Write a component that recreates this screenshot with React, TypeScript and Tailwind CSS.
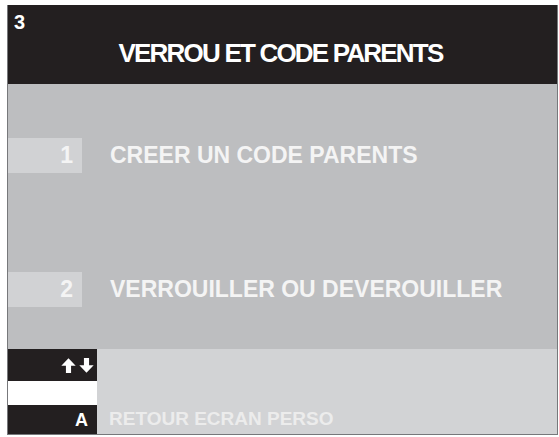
export default function App() {
  const font = { fontFamily: '"Liberation Sans", Arial, sans-serif' };

  return (
    <div className="w-[559px] h-[437px] bg-white pt-[5px] pl-[7px] pr-[1px] pb-[2px]" style={font}>
      <div className="flex flex-col h-full border-l border-r border-b border-[#77787b]">
        {/* titre */}
        <header className="h-[79px] bg-[#231f20] flex flex-col pt-[7px] pl-[6px] text-white font-bold">
          <div className="text-[20px] leading-[20px]">3</div>
          <h1 className="mt-[8px] pr-[10px] text-center text-[26px] leading-[26px] tracking-[-1.8px]">VERROU ET CODE PARENTS</h1>
        </header>

        {/* menu */}
        <div className="h-[265px] bg-[#bdbec0] flex flex-col pt-[54px] gap-[99px]">
          <MenuItem num="1" label="CREER UN CODE PARENTS" />
          <MenuItem num="2" label="VERROUILLER OU DEVEROUILLER" />
        </div>

        {/* bas */}
        <div className="h-[85px] flex bg-[#d2d3d5]">
          <div className="w-[89px] flex flex-col">
            <div className="h-[32px] bg-[#231f20] flex items-center justify-end gap-[3px] pr-[3px]">
              <Arrow />
              <Arrow down />
            </div>
            <div className="h-[24px] bg-white" />
            <div className="h-[29px] bg-[#231f20] flex items-center justify-end pr-[9px] text-white font-bold text-[18px] leading-none">
              A
            </div>
          </div>
          <div className="flex-1 flex items-end pb-[6px] pl-[12px]">
            <span className="text-[#ececec] font-bold text-[19px] leading-[19px]">RETOUR ECRAN PERSO</span>
          </div>
        </div>
      </div>
    </div>
  );
}

function MenuItem({ num, label }: { num: string; label: string }) {
  return (
    <div className="flex items-center h-[35px]">
      <div className="w-[74px] h-full bg-[#d1d2d4] flex items-center justify-end pr-[9px] text-[#f4f4f4] font-bold text-[23px] leading-none">
        {num}
      </div>
      <span className="ml-[28px] text-[#f4f4f4] font-bold text-[23px] leading-none">{label}</span>
    </div>
  );
}

function Arrow({ down = false }: { down?: boolean }) {
  return (
    <svg viewBox="0 0 14 14" className={`w-[15px] h-[15px] ${down ? 'rotate-180' : ''}`} fill="white">
      <path d="M7 0.3 L13.7 7.3 L9.4 7.3 L9.4 14 L4.6 14 L4.6 7.3 L0.3 7.3 Z" />
    </svg>
  );
}
